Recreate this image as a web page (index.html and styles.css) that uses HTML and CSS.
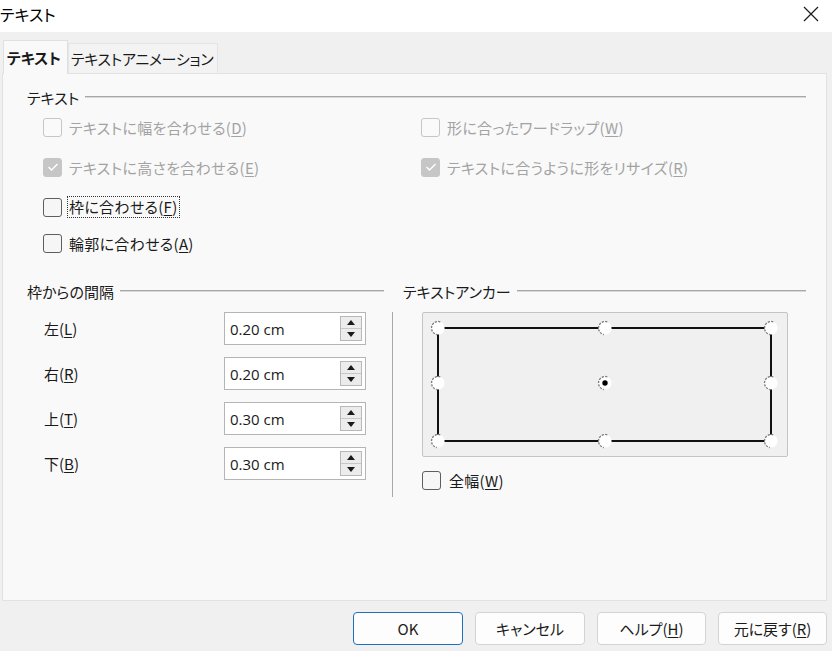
FILE: index.html
```html
<!DOCTYPE html>
<html lang="ja">
<head>
<meta charset="utf-8">
<title>テキスト</title>
<link rel="stylesheet" href="styles.css">
</head>
<body>
<div class="window">
  <header class="titlebar">
    <span class="title">テキスト</span>
    <svg class="close" width="16" height="16" viewBox="0 0 16 16"><path d="M1 1 L15 15 M15 1 L1 15" stroke="#1a1a1a" stroke-width="1.2" fill="none"/></svg>
  </header>

  <div class="tabs">
    <div class="tab active">テキスト</div>
    <div class="tab">テキストアニメーション</div>
  </div>

  <div class="panel">
    <div class="frame-head"><span>テキスト</span><i class="rule"></i></div>
    <div class="check-grid">
      <label class="check disabled"><span class="box"></span><span>テキストに幅を合わせる(<u>D</u>)</span></label>
      <label class="check disabled"><span class="box"></span><span>形に合ったワードラップ(<u>W</u>)</span></label>
      <label class="check disabled"><span class="box checked"><svg width="12" height="10" viewBox="0 0 12 10"><path d="M1.5 5 L4.5 8 L10.5 2" stroke="#fff" stroke-width="1.4" fill="none"/></svg></span><span>テキストに高さを合わせる(<u>E</u>)</span></label>
      <label class="check disabled"><span class="box checked"><svg width="12" height="10" viewBox="0 0 12 10"><path d="M1.5 5 L4.5 8 L10.5 2" stroke="#fff" stroke-width="1.4" fill="none"/></svg></span><span>テキストに合うように形をリサイズ(<u>R</u>)</span></label>
      <label class="check"><span class="box"></span><span class="focus">枠に合わせる(<u>F</u>)</span></label>
      <span></span>
      <label class="check short"><span class="box"></span><span>輪郭に合わせる(<u>A</u>)</span></label>
    </div>

    <div class="lower">
      <section class="spacing">
        <div class="frame-head"><span>枠からの間隔</span><i class="rule"></i></div>
        <div class="spin-list">
          <div class="spin-row"><span class="lbl">左(<u>L</u>)</span><div class="spin"><span class="val">0.20 cm</span><span class="arrows"><b class="up"></b><b class="down"></b></span></div></div>
          <div class="spin-row"><span class="lbl">右(<u>R</u>)</span><div class="spin"><span class="val">0.20 cm</span><span class="arrows"><b class="up"></b><b class="down"></b></span></div></div>
          <div class="spin-row"><span class="lbl">上(<u>T</u>)</span><div class="spin"><span class="val">0.30 cm</span><span class="arrows"><b class="up"></b><b class="down"></b></span></div></div>
          <div class="spin-row"><span class="lbl">下(<u>B</u>)</span><div class="spin"><span class="val">0.30 cm</span><span class="arrows"><b class="up"></b><b class="down"></b></span></div></div>
        </div>
      </section>
      <section class="anchor">
        <div class="frame-head anchor-head"><span>テキストアンカー</span><i class="rule"></i></div>
        <div class="anchor-body">
          <div class="anchor-box">
            <svg width="365" height="145" viewBox="0 0 365 145">
              <defs>
                <g id="pt">
                  <circle r="6.6" fill="#fff"/>
                  <path d="M2.3 -6.2 A6.6 6.6 0 1 0 -1.2 6.5" stroke="#7a7a7a" stroke-width="1.3" stroke-dasharray="2.2 1.2" fill="none"/>
                </g>
              </defs>
              <path d="M16 16 H349 V129 H16 Z" stroke="#111" stroke-width="2" fill="none"/>
              <use href="#pt" x="16" y="16"/>
              <use href="#pt" x="183" y="16"/>
              <use href="#pt" x="349" y="16"/>
              <use href="#pt" x="16" y="71"/>
              <use href="#pt" x="183" y="71"/>
              <circle cx="183" cy="71" r="2.7" fill="#000"/>
              <use href="#pt" x="349" y="71"/>
              <use href="#pt" x="16" y="129"/>
              <use href="#pt" x="183" y="129"/>
              <use href="#pt" x="349" y="129"/>
            </svg>
          </div>
          <label class="check full"><span class="box"></span><span>全幅(<u>W</u>)</span></label>
        </div>
      </section>
    </div>
  </div>

  <footer class="buttons">
    <button class="btn default">OK</button>
    <button class="btn">キャンセル</button>
    <button class="btn narrow">ヘルプ(<u>H</u>)</button>
    <button class="btn narrow">元に戻す(<u>R</u>)</button>
  </footer>
</div>
</body>
</html>
```

FILE: styles.css
```css
* { box-sizing: border-box; }
html, body { margin: 0; padding: 0; }
body {
  width: 832px;
  height: 651px;
  overflow: hidden;
  background: #f0f0f0;
  font-family: "Noto Sans CJK JP", "Noto Sans", sans-serif;
  font-size: 15px;
  color: #1a1a1a;
  font-feature-settings: "palt";
}
u { text-decoration: underline; text-underline-offset: 2px; text-decoration-thickness: 1px; }

.window { display: flex; flex-direction: column; height: 651px; }

.titlebar {
  height: 32px;
  background: #fff;
  display: flex;
  align-items: center;
  justify-content: space-between;
  padding: 0 13px 4px 0;
}
.title { font-size: 16px; color: #000; }
.close { display: block; }

.tabs {
  display: flex;
  align-items: flex-end;
  margin: 8px 0 0 3px;
  height: 33px;
}
.tab {
  height: 30px;
  padding: 0 4px 0 2px;
  display: flex;
  align-items: center;
  background: #f3f3f3;
  border: 1px solid #e4e4e4;
  border-bottom: none;
  font-size: 15px;
  letter-spacing: -0.3px;
  color: #1a1a1a;
}
.tab.active {
  height: 34px;
  margin-bottom: -1px;
  position: relative;
  z-index: 1;
  font-weight: bold;
  letter-spacing: 0;
  background: #f9f9f9;
  padding: 0 6px 0 3px;
  border-color: #e0e0e0;
}

.panel {
  margin: 0 5px 0 2px;
  height: 528px;
  background: #f9f9f9;
  border: 1px solid #e2e2e2;
  padding: 13px 20px 0 24px;
}

.frame-head {
  display: flex;
  align-items: center;
  height: 20px;
  color: #1a1a1a;
}
.frame-head span { padding-right: 6px; }
.rule { flex: 1; height: 2px; background: #a8a8a8; border-bottom: 1px solid #d8d8d8; display: block; }

.check-grid {
  display: grid;
  grid-template-columns: 378px 1fr;
  grid-auto-rows: 40px;
  padding-left: 16px;
  margin-bottom: -4px;
}
.check {
  display: flex;
  align-items: center;
  gap: 7px;
  color: #1a1a1a;
  letter-spacing: 0.3px;
}
.check.short { height: 32px; align-self: start; margin-top: 0; }
.check.disabled { color: #a3a3a3; }
.box {
  width: 19px;
  height: 19px;
  border: 1px solid #5e5e5e;
  border-radius: 3px;
  background: #f6f6f6;
  display: flex;
  align-items: center;
  justify-content: center;
  flex: none;
}
.disabled .box { border-color: #c6c6c6; background: #fafafa; }
.disabled .box.checked { background: #c6c6c6; border-color: #c6c6c6; }
.focus { outline: 1px dotted #333; outline-offset: 1px; line-height: 18px; }

.lower {
  display: grid;
  grid-template-columns: 357px 414px;
  column-gap: 8px;
  margin-top: 18px;
}
.spin-list {
  display: flex;
  flex-direction: column;
  gap: 12px;
  margin-top: 11px;
  padding-left: 17px;
}
.spin-row { display: flex; align-items: center; height: 33px; }
.lbl { width: 180px; }
.spin {
  width: 142px;
  height: 33px;
  border: 1px solid #b5b5b5;
  background: #fff;
  display: flex;
  align-items: center;
  justify-content: space-between;
  padding: 0 3px 0 5px;
  font-family: "Open Sans", "Noto Sans", sans-serif;
  font-size: 15px;
}
.arrows {
  width: 22px;
  height: 25px;
  border: 1px solid #b8b8b8;
  background: #ececec;
  display: flex;
  flex-direction: column;
}
.arrows b { flex: 1; display: flex; align-items: center; justify-content: center; }
.arrows b.up { border-bottom: 1px solid #c8c8c8; }
.arrows b::before {
  content: "";
  width: 0; height: 0;
  border-left: 4px solid transparent;
  border-right: 4px solid transparent;
}
.arrows b.up::before { border-bottom: 5px solid #1a1a1a; }
.arrows b.down::before { border-top: 5px solid #1a1a1a; }

.anchor-head { padding-left: 11px; }
.anchor-body {
  margin-top: 11px;
  border-left: 1px solid #a8a8a8;
  height: 185px;
  padding-left: 29px;
}
.anchor-box {
  width: 366px;
  height: 145px;
  background: #f0f0f0;
  border: 1px solid #c4c4c4;
  border-radius: 2px;
}
.anchor-box svg { display: block; margin: -1px 0 0 -1px; }
.check.full { margin-top: 13px; gap: 8px; }

.buttons {
  display: flex;
  justify-content: flex-end;
  gap: 12px;
  padding: 11px 5px 0 0;
}
.btn {
  width: 110px;
  height: 33px;
  background: #fdfdfd;
  border: 1px solid #d3d3d3;
  border-radius: 4px;
  font-family: "Noto Sans CJK JP", "Noto Sans", sans-serif;
  font-feature-settings: "palt";
  font-size: 15px;
  color: #1a1a1a;
  padding: 0;
}
.btn.narrow { width: 109px; }
.btn.default { border: 1.5px solid #1f6fc0; }
```
